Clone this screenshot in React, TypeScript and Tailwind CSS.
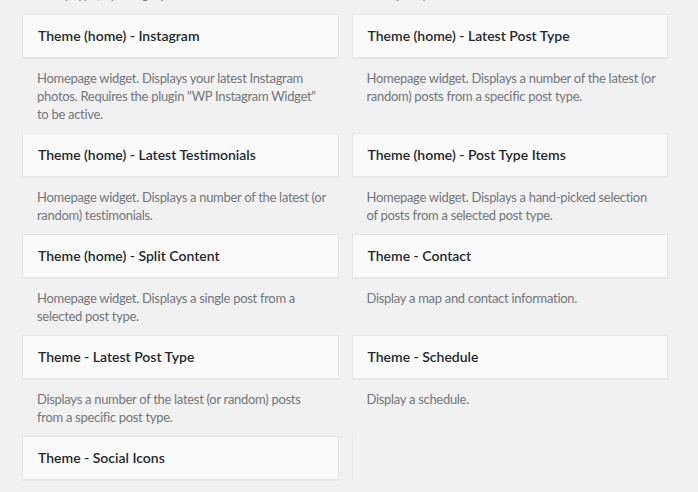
import React from "react";

type Item = { title: string; desc: string[] } | null;

const rows: [Item, Item][] = [
  [
    { title: "Theme (home) - Instagram", desc: ["Homepage widget. Displays your latest Instagram", "photos. Requires the plugin \"WP Instagram Widget\"", "to be active."] },
    { title: "Theme (home) - Latest Post Type", desc: ["Homepage widget. Displays a number of the latest (or", "random) posts from a specific post type."] },
  ],
  [
    { title: "Theme (home) - Latest Testimonials", desc: ["Homepage widget. Displays a number of the latest (or", "random) testimonials."] },
    { title: "Theme (home) - Post Type Items", desc: ["Homepage widget. Displays a hand-picked selection", "of posts from a selected post type."] },
  ],
  [
    { title: "Theme (home) - Split Content", desc: ["Homepage widget. Displays a single post from a", "selected post type."] },
    { title: "Theme - Contact", desc: ["Display a map and contact information."] },
  ],
  [
    { title: "Theme - Latest Post Type", desc: ["Displays a number of the latest (or random) posts", "from a specific post type."] },
    { title: "Theme - Schedule", desc: ["Display a schedule."] },
  ],
];

function Card({ title }: { title: string }) {
  return (
    <div className="h-[44px] flex items-center px-[15px] bg-[#fafafa] border border-[#e5e5e5] shadow-[0_1px_1px_rgba(0,0,0,0.04)]">
      <h3 className="text-[14px] font-semibold text-[#23282d] leading-none">{title}</h3>
    </div>
  );
}

function Desc({ lines }: { lines: string[] }) {
  return (
    <div className="pt-[11px] pb-[10px] px-[15px] text-[13px] leading-[18px] tracking-[-0.3px] text-[#72777c]">
      {lines.map((l, i) => (
        <div key={i} className="whitespace-nowrap">{l}</div>
      ))}
    </div>
  );
}

export default function App() {
  return (
    <div
      className="w-[698px] h-[492px] overflow-hidden bg-[#f1f1f1]"
      style={{ fontFamily: '"Segoe UI", Lato, sans-serif' }}
    >
      <div className="mt-[-25px] pl-[22px] w-[668px] grid grid-cols-2 gap-x-[13px]">
        <div className="pt-[10px] pb-[11px] px-[15px] text-[13px] leading-[18px] tracking-[-0.3px] text-[#72777c] whitespace-nowrap">
          of any type, by category.
        </div>
        <div className="pt-[10px] pb-[11px] px-[15px] text-[13px] leading-[18px] tracking-[-0.3px] text-[#72777c] whitespace-nowrap">
          from your posts.
        </div>
        {rows.map((r, ri) => (
          <React.Fragment key={ri}>
            {r.map((it, ci) => (
              <div key={ci}>
                {it && (
                  <>
                    <Card title={it.title} />
                    <Desc lines={it.desc} />
                  </>
                )}
              </div>
            ))}
          </React.Fragment>
        ))}
        <div>
          <Card title="Theme - Social Icons" />
        </div>
        <div>
          <div className="h-[44px] w-[2px] border-l border-[#e5e5e5] bg-[#fafafa]" />
        </div>
      </div>
    </div>
  );
}
